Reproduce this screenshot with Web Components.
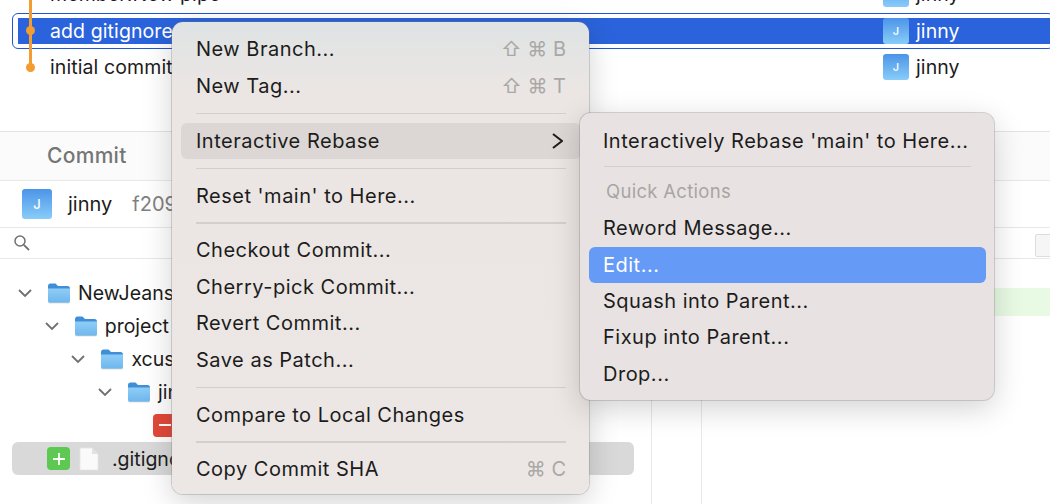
<!DOCTYPE html>
<html><head><meta charset="utf-8">
<style>
html,body{margin:0;padding:0;background:#fff;width:1050px;height:504px;overflow:hidden}
body{font-family:"Inter","Liberation Sans",sans-serif;color:#1c1c1c}
</style></head><body>
<app-window>
  <commit-list slot="top">
    <commit-row msg="member:New pipe" author="jinny"></commit-row>
    <commit-row msg="add gitignore" author="jinny" selected></commit-row>
    <commit-row msg="initial commit" author="jinny" last></commit-row>
  </commit-list>
  <commit-pane slot="bottom"></commit-pane>
</app-window>
<menu-panel style="left:172px;top:22px;width:417px;padding:9.400px 8px 6.600px 9px" tint>
  <menu-item label="New Branch..." keys="⇧ ⌘ B"></menu-item>
  <menu-item label="New Tag..." keys="⇧ ⌘ T"></menu-item>
  <menu-sep></menu-sep>
  <menu-item label="Interactive Rebase" sub hover></menu-item>
  <menu-sep></menu-sep>
  <menu-item label="Reset 'main' to Here..."></menu-item>
  <menu-sep></menu-sep>
  <menu-item label="Checkout Commit..."></menu-item>
  <menu-item label="Cherry-pick Commit..."></menu-item>
  <menu-item label="Revert Commit..."></menu-item>
  <menu-item label="Save as Patch..."></menu-item>
  <menu-sep></menu-sep>
  <menu-item label="Compare to Local Changes"></menu-item>
  <menu-sep></menu-sep>
  <menu-item label="Copy Commit SHA" keys="⌘ C"></menu-item>
</menu-panel>
<menu-panel style="left:580px;top:113px;width:414px;padding:10px 8px 8px 9px">
  <menu-item label="Interactively Rebase 'main' to Here..." inset="14"></menu-item>
  <menu-sep style="height:14.400px"></menu-sep>
  <menu-item label="Quick Actions" disabled inset="17"></menu-item>
  <menu-item label="Reword Message..." inset="14"></menu-item>
  <menu-item label="Edit..." active inset="14"></menu-item>
  <menu-item label="Squash into Parent..." inset="14"></menu-item>
  <menu-item label="Fixup into Parent..." inset="14"></menu-item>
  <menu-item label="Drop..." inset="14"></menu-item>
</menu-panel>
<script>
class Base extends HTMLElement{
  render(html){const r=this.shadowRoot||this.attachShadow({mode:'open'});r.innerHTML=html;return r}
}
customElements.define('user-avatar',class extends Base{connectedCallback(){
  const s=this.getAttribute('size')||26;
  this.render(`<style>:host{display:block;width:${s}px;height:${s}px;flex:none}
  div{width:100%;height:100%;border-radius:3px;background:linear-gradient(#4c94e8,#88cdf9);color:#fff;display:flex;align-items:center;justify-content:center;font:500 ${Math.round(s*.42)}px "Inter",sans-serif}</style><div>J</div>`)
}});
customElements.define('app-window',class extends Base{connectedCallback(){
  this.render(`<style>:host{display:flex;flex-direction:column;width:1050px;height:504px}
  .t{height:131px;flex:none;border-bottom:1px solid #e3e3e3;overflow:hidden}
  .b{flex:1;min-height:0}</style><div class="t"><slot name="top"></slot></div><div class="b"><slot name="bottom"></slot></div>`)
}});
customElements.define('commit-list',class extends Base{connectedCallback(){
  this.render(`<style>:host{display:flex;flex-direction:column;margin-top:-24.250px}</style><slot></slot>`)
}});
customElements.define('commit-row',class extends Base{connectedCallback(){
  const sel=this.hasAttribute('selected'),last=this.hasAttribute('last');
  this.render(`<style>
  :host{display:block;height:36.500px;position:relative}
  .ring{position:absolute;left:12px;right:-4px;top:.5px;height:36px;border:1.750px solid #1f55d6;border-radius:6px;box-sizing:border-box;display:${sel?'block':'none'}}
  .row{position:relative;display:flex;align-items:center;height:100%;padding:0 0 0 50px;font-size:19.500px;letter-spacing:.1px;color:${sel?'#fff':'#1c1c1c'}}
  .fill{position:absolute;left:17.500px;right:0;top:5.250px;height:26px;background:#2a63db;display:${sel?'block':'none'}}
  .msg{position:relative;flex:1;white-space:nowrap}
  .au{position:relative;display:flex;align-items:center;gap:7px;width:167px;flex:none}
  .line{position:absolute;left:29px;width:2.500px;top:-6px;bottom:${last?'50%':'-1px'};background:#f39c2f}
  .dot{position:absolute;left:25.500px;top:50%;width:9px;height:9px;margin-top:-4.500px;border-radius:50%;background:#f39c2f}
  </style><div class="fill"></div><div class="ring"></div><div class="line"></div><div class="dot"></div>
  <div class="row"><span class="msg">${this.getAttribute('msg')}</span><span class="au"><user-avatar></user-avatar><span>${this.getAttribute('author')}</span></span></div>`)
}});
const folder=`<svg width="24" height="22" viewBox="0 0 24 22" style="display:block;flex:none"><defs><linearGradient id="f" x1="0" y1="0" x2="0" y2="1"><stop offset="0" stop-color="#8fcdf6"/><stop offset="1" stop-color="#6db6ee"/></linearGradient></defs><path d="M1 4.500Q1 1.500 3.500 1.500H8.500L11 4H20.500Q23 4 23 6.500V8H1Z" fill="#3f8fd8"/><path d="M1 6.500H23V19Q23 21 21 21H3Q1 21 1 19Z" fill="url(#f)"/><path d="M1.500 20.800H22.500" stroke="#b8c6d2" stroke-width=".8"/></svg>`;
customElements.define('tree-row',class extends Base{connectedCallback(){
  const d=+this.getAttribute('depth')||0;
  this.render(`<style>:host{display:block;height:33px}
  .r{display:flex;align-items:center;height:100%;padding-left:${17+d*26.7}px;font-size:19.500px;white-space:nowrap}
  .c{width:16px;height:10px;flex:none;display:block;margin-right:14px}
  span{margin-left:7px}
  </style><div class="r"><svg class="c" viewBox="0 0 16 10"><path d="M2 2L8 8L14 2" fill="none" stroke="#707070" stroke-width="1.800"/></svg>${folder}<span>${this.getAttribute('label')}</span></div>`)
}});
customElements.define('commit-pane',class extends Base{connectedCallback(){
  this.render(`<style>:host{display:block;height:100%;position:relative;font-size:19.500px}
  .tab{height:49px;display:flex;align-items:center;padding:0 0 1px 47px;color:#757575;font-weight:500;font-size:21px;letter-spacing:.3px;background:#fbfbfb;border-bottom:1.500px solid #e8e8e8;box-sizing:border-box}
  .who{height:47px;display:flex;align-items:center;padding-left:22px;gap:16px;border-bottom:1.500px solid #e8e8e8;box-sizing:border-box;font-size:20px}
  .who .n{margin-right:4px}
  .sha{color:#808080}
  .search{height:31px;display:flex;align-items:center;padding-left:13px;border-bottom:1.500px solid #e8e8e8;box-sizing:border-box}
  .body{display:grid;grid-template-columns:652px 50px 1fr;height:245px}
  .tree{border-right:1.500px solid #e8e8e8;padding-top:17.500px}
  .mid{border-right:1.500px solid #e8e8e8}
  .diff{position:relative;padding-top:29px}
  .added{height:28px;background:#e8fae4}
  .file{margin:.5px 0 0 12px;width:622px;height:33px;border-radius:6px;background:#d9d9d9;display:flex;align-items:center;padding-left:35px;box-sizing:border-box}
  .badge{width:23px;height:23px;border-radius:4px;flex:none;display:flex;align-items:center;justify-content:center}
  .g{background:#5dc852}.rd{background:#e2483a}
  .rmrow{height:33px;display:flex;align-items:center;padding-left:153px}
  .doc{width:20px;height:24px;flex:none;margin:0 13px 0 9px}
  .corner{position:absolute;right:-2px;top:-25px;width:15px;height:21px;background:#f6f6f6;border:1px solid #ddd;border-radius:2px}
  </style>
  <div class="tab">Commit</div>
  <div class="who"><user-avatar size="30"></user-avatar><span class="n">jinny</span><span class="sha">f209</span></div>
  <div class="search"><svg width="18" height="18" viewBox="0 0 18 18"><circle cx="7" cy="7" r="5" fill="none" stroke="#707070" stroke-width="1.500"/><path d="M10.800 10.800L16 16" stroke="#707070" stroke-width="1.800"/></svg></div>
  <div class="body"><div class="tree">
    <tree-row depth="0" label="NewJeans"></tree-row>
    <tree-row depth="1" label="project"></tree-row>
    <tree-row depth="2" label="xcus"></tree-row>
    <tree-row depth="3" label="jin"></tree-row>
    <div class="rmrow"><span class="badge rd"><svg width="14" height="14" viewBox="0 0 14 14"><path d="M1 7H13" stroke="#fff" stroke-width="2"/></svg></span></div>
    <div class="file"><span class="badge g"><svg width="14" height="14" viewBox="0 0 14 14"><path d="M1 7H13M7 1V13" stroke="#fff" stroke-width="1.800"/></svg></span>
    <svg class="doc" viewBox="0 0 20 24"><path d="M1 1H13L19 7V23H1Z" fill="#fafafa" stroke="#e4e4e4" stroke-width=".8"/><path d="M13 1V7H19Z" fill="#e2e2e2"/></svg><span>.gitignore</span></div>
  </div><div class="mid"></div><div class="diff"><div class="corner"></div><div class="added"></div></div></div>`)
}});
customElements.define('menu-panel',class extends Base{connectedCallback(){
  const tint=this.hasAttribute('tint');
  this.render(`<style>:host{display:block;position:absolute;box-sizing:border-box;border-radius:11px;background:${tint?'linear-gradient(#dfe3e4 0,#ebe6e4 70px,#ece7e4 100%)':'#e8e3e2'};box-shadow:0 0 0 1px rgba(120,120,120,.3),0 8px 30px rgba(0,0,0,.18);}</style><slot></slot>`)
}});
customElements.define('menu-item',class extends Base{connectedCallback(){
  const a=this.hasAttribute('active'),h=this.hasAttribute('hover'),dis=this.hasAttribute('disabled'),sub=this.hasAttribute('sub');
  const k=this.getAttribute('keys'),ins=this.getAttribute('inset')||15;
  this.render(`<style>:host{display:block;height:36.400px}
  .i{height:36px;display:flex;align-items:center;justify-content:space-between;padding:0 15px 0 ${ins}px;border-radius:6px;font-size:${dis?18.5:20}px;letter-spacing:${dis?.3:.5}px;white-space:nowrap;background:${a?'#659af7':h?'#dcd7d5':'transparent'};color:${a?'#fff':dis?'#a8a5a4':'#1c1c1c'};box-sizing:border-box;${dis?'padding-bottom:2px;':''}}
  .k{color:#aaa8a6;font-size:20px;letter-spacing:0}
  svg{margin-right:3px}
  </style><div class="i"><span>${this.getAttribute('label')}</span>${k?`<span class="k">${k}</span>`:''}${sub?'<svg width="12" height="16" viewBox="0 0 12 16"><path d="M2 1L11 8L2 15" fill="none" stroke="#1c1c1c" stroke-width="2"/></svg>':''}</div>`)
}});
customElements.define('menu-sep',class extends Base{connectedCallback(){
  this.render(`<style>:host{display:flex;height:18.500px;align-items:center;padding:0 15px}div{height:1.500px;background:#d4cfcd;flex:1}</style><div></div>`)
}});
</script>
</body></html>
